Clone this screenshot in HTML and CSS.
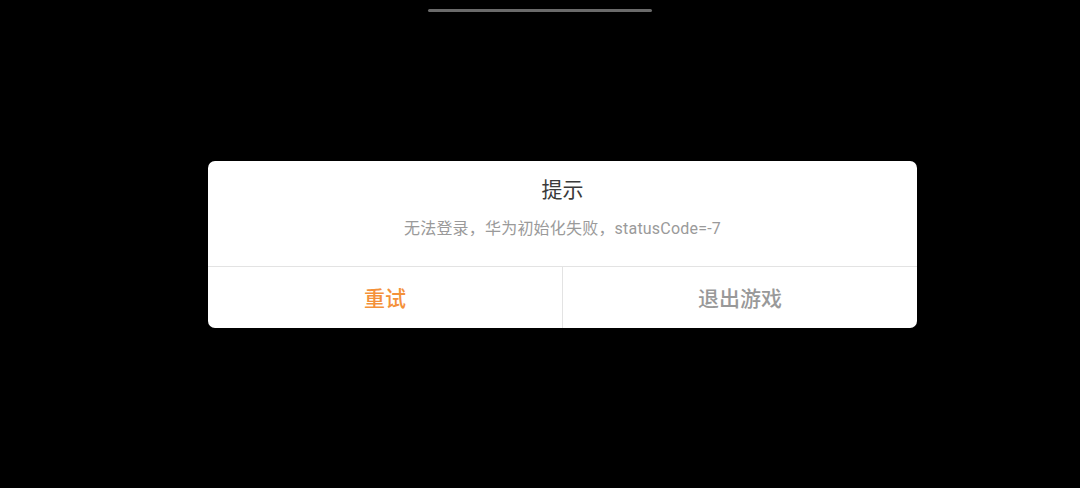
FILE: index.html
```html
<!DOCTYPE html>
<html lang="zh">
<head>
<meta charset="utf-8">
<link rel="stylesheet" href="styles.css">
</head>
<body>
<div class="screen">
  <div class="home-bar"></div>
  <div class="dialog">
    <div class="dialog-body">
      <div class="dialog-title">提示</div>
      <div class="dialog-message">无法登录，华为初始化失败，statusCode=-7</div>
    </div>
    <div class="dialog-actions">
      <div class="btn btn-primary">重试</div>
      <div class="btn btn-secondary">退出游戏</div>
    </div>
  </div>
</div>
</body>
</html>
```
FILE: styles.css
```css
html, body {
  margin: 0;
  padding: 0;
  background: #000;
}
.screen {
  position: relative;
  box-sizing: border-box;
  width: 1080px;
  height: 488px;
  padding: 0 0 0 45px;
  display: flex;
  align-items: center;
  justify-content: center;
  font-family: Roboto, "Noto Sans CJK SC", sans-serif;
}
.home-bar {
  position: absolute;
  top: 9px;
  left: 428px;
  width: 224px;
  height: 3px;
  border-radius: 2px;
  background: #6a6a6a;
}
.dialog {
  width: 709px;
  background: #fff;
  border-radius: 7px;
  overflow: hidden;
  display: flex;
  flex-direction: column;
}
.dialog-body {
  padding: 15px 20px 26px;
  display: flex;
  flex-direction: column;
  align-items: center;
  gap: 14px;
  border-bottom: 1px solid #e3e3e3;
}
.dialog-title {
  font-size: 21px;
  line-height: 28px;
  color: #3a3a3a;
}
.dialog-message {
  font-size: 16px;
  line-height: 22px;
  color: #9a9a9a;
  letter-spacing: 0.2px;
}
.dialog-actions {
  display: flex;
  height: 61px;
}
.btn {
  flex: 1;
  display: flex;
  align-items: center;
  justify-content: center;
  font-size: 21px;
  font-weight: 500;
}
.btn-primary {
  color: #f4913a;
  border-right: 1px solid #e3e3e3;
}
.btn-secondary {
  color: #999;
}
```
